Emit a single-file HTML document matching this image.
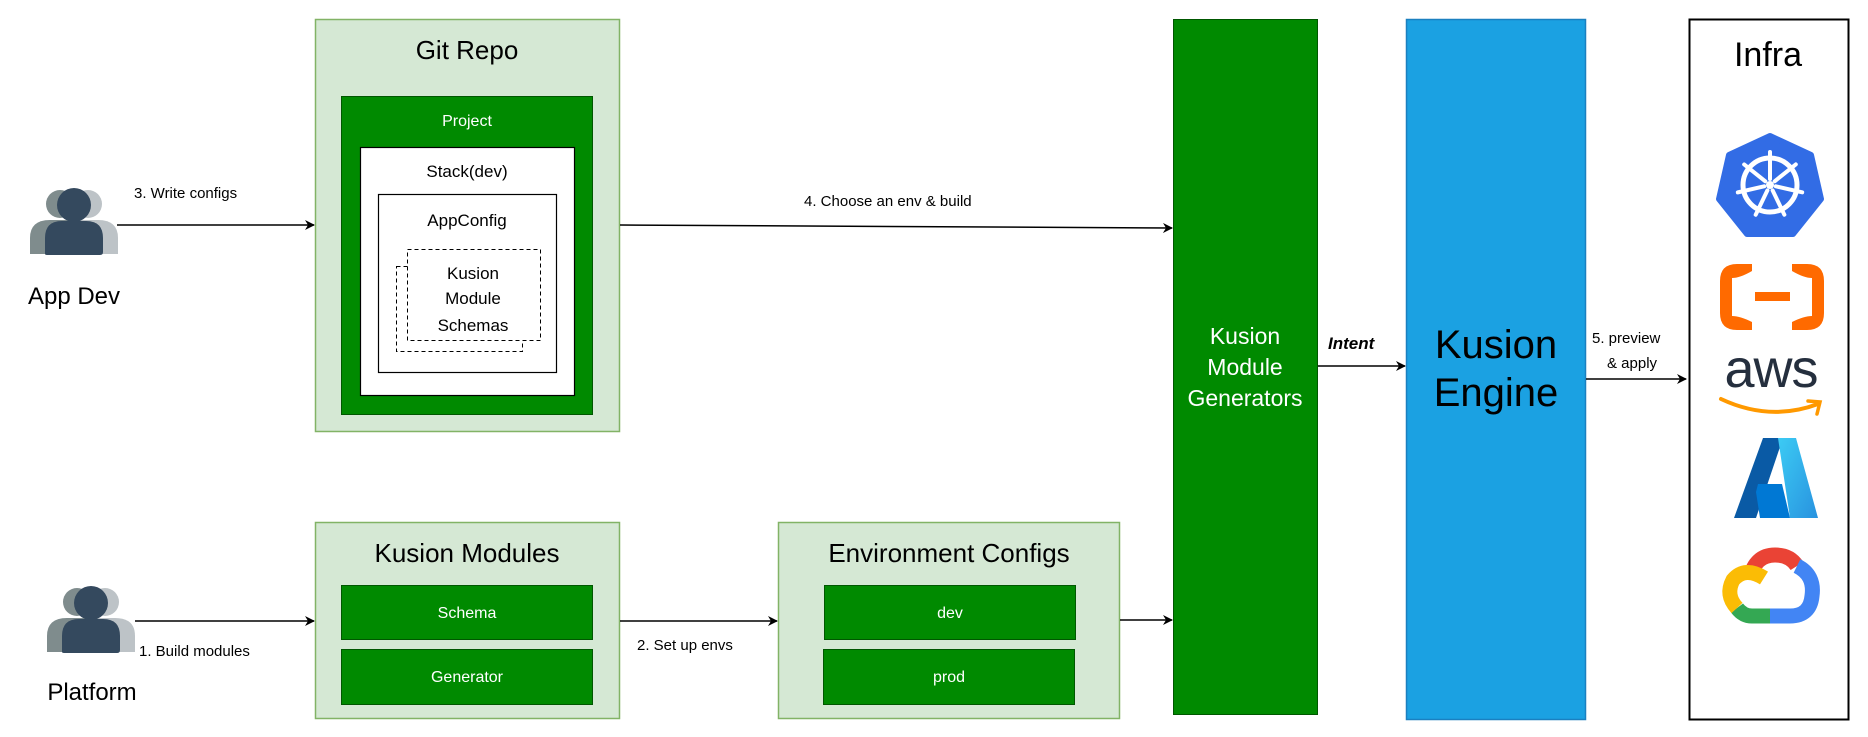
<!DOCTYPE html>
<html><head><meta charset="utf-8"><style>
html,body{margin:0;padding:0;background:#fff;}
svg{display:block;font-family:"Liberation Sans",Arial,sans-serif;}
</style></head><body>
<svg width="1868" height="737" viewBox="0 0 1868 737" xmlns="http://www.w3.org/2000/svg">
<defs>
<marker id="ar" viewBox="0 0 10 10" refX="9" refY="5" markerWidth="10" markerHeight="10" markerUnits="userSpaceOnUse" orient="auto">
<path d="M0,0 L10,5 L0,10 L3,5 z" fill="#000"/></marker>
<g id="person">
<circle cx="-14" cy="16" r="14" fill="#7f8c8d"/><path d="M-44,66 L-44,50 Q-44,32 -24,32 L-4,32 Q16,32 16,50 L16,66 Z" fill="#7f8c8d"/>
<circle cx="14" cy="16" r="14" fill="#bdc3c7"/><path d="M-16,66 L-16,50 Q-16,32 4,32 L24,32 Q44,32 44,50 L44,66 Z" fill="#bdc3c7"/>
<circle cx="0" cy="17" r="17" fill="#34495e"/><path d="M-29,66 Q-29,67 -26,67 L26,67 Q29,67 29,64 L29,50 Q29,33 12,33 L-12,33 Q-29,33 -29,50 Z" fill="#34495e"/>
</g>
</defs>

<!-- App Dev -->
<use href="#person" x="74" y="188"/>
<text x="74" y="304" font-size="24" text-anchor="middle">App Dev</text>
<line x1="117" y1="225" x2="314" y2="225" stroke="#000" stroke-width="1.5" marker-end="url(#ar)"/>
<text x="134" y="198" font-size="15">3. Write configs</text>

<!-- Git Repo -->
<rect x="315.5" y="19.5" width="304" height="412" fill="#d5e8d4" stroke="#82b366" stroke-width="1.5"/>
<text x="467" y="59" font-size="26" text-anchor="middle">Git Repo</text>
<rect x="341.5" y="96.5" width="251" height="318" fill="#008a00" stroke="#005700"/>
<text x="467" y="126" font-size="16" fill="#fff" text-anchor="middle">Project</text>
<rect x="360.5" y="147.5" width="214" height="248" fill="#fff" stroke="#000" stroke-width="1.2"/>
<text x="467" y="177" font-size="17" text-anchor="middle">Stack(dev)</text>
<rect x="378.5" y="194.5" width="178" height="178" fill="#fff" stroke="#000" stroke-width="1.2"/>
<text x="467" y="226" font-size="17" text-anchor="middle">AppConfig</text>
<rect x="396.5" y="266.5" width="126" height="85" fill="#fff" stroke="#000" stroke-dasharray="4 3"/>
<rect x="407.5" y="249.5" width="133" height="91" fill="#fff" stroke="#000" stroke-dasharray="4 3"/>
<text x="473" y="279" font-size="17" text-anchor="middle">Kusion</text>
<text x="473" y="304" font-size="17" text-anchor="middle">Module</text>
<text x="473" y="331" font-size="17" text-anchor="middle">Schemas</text>

<line x1="620" y1="225" x2="1172" y2="228" stroke="#000" stroke-width="1.5" marker-end="url(#ar)"/>
<text x="804" y="206" font-size="15">4. Choose an env &amp; build</text>

<!-- Platform -->
<use href="#person" x="91" y="586"/>
<text x="92" y="700" font-size="24" text-anchor="middle">Platform</text>
<line x1="135" y1="621" x2="314" y2="621" stroke="#000" stroke-width="1.5" marker-end="url(#ar)"/>
<text x="139" y="656" font-size="15">1. Build modules</text>

<!-- Kusion Modules -->
<rect x="315.5" y="522.5" width="304" height="196" fill="#d5e8d4" stroke="#82b366" stroke-width="1.5"/>
<text x="467" y="562" font-size="26" text-anchor="middle">Kusion Modules</text>
<rect x="341.5" y="585.5" width="251" height="54" fill="#008a00" stroke="#005700"/>
<text x="467" y="618" font-size="16" fill="#fff" text-anchor="middle">Schema</text>
<rect x="341.5" y="649.5" width="251" height="55" fill="#008a00" stroke="#005700"/>
<text x="467" y="682" font-size="16" fill="#fff" text-anchor="middle">Generator</text>

<line x1="620" y1="621" x2="777" y2="621" stroke="#000" stroke-width="1.5" marker-end="url(#ar)"/>
<text x="637" y="650" font-size="15">2. Set up envs</text>

<!-- Environment Configs -->
<rect x="778.5" y="522.5" width="341" height="196" fill="#d5e8d4" stroke="#82b366" stroke-width="1.5"/>
<text x="949" y="562" font-size="26" text-anchor="middle">Environment Configs</text>
<rect x="824.5" y="585.5" width="251" height="54" fill="#008a00" stroke="#005700"/>
<text x="950" y="618" font-size="16" fill="#fff" text-anchor="middle">dev</text>
<rect x="823.5" y="649.5" width="251" height="55" fill="#008a00" stroke="#005700"/>
<text x="949" y="682" font-size="16" fill="#fff" text-anchor="middle">prod</text>
<line x1="1120" y1="620" x2="1172" y2="620" stroke="#000" stroke-width="1.5" marker-end="url(#ar)"/>

<!-- Generators -->
<rect x="1173.5" y="19.5" width="144" height="695" fill="#008a00" stroke="#005700"/>
<text x="1245" y="344" font-size="23" fill="#fff" text-anchor="middle">Kusion</text>
<text x="1245" y="375" font-size="23" fill="#fff" text-anchor="middle">Module</text>
<text x="1245" y="406" font-size="23" fill="#fff" text-anchor="middle">Generators</text>

<text x="1328" y="349" font-size="17" font-weight="bold" font-style="italic">Intent</text>
<line x1="1318" y1="366" x2="1405" y2="366" stroke="#000" stroke-width="1.5" marker-end="url(#ar)"/>

<!-- Engine -->
<rect x="1406.5" y="19.5" width="179" height="700" fill="#1ba1e2" stroke="#1b80c0" stroke-width="1.5"/>
<text x="1496" y="358" font-size="40" text-anchor="middle">Kusion</text>
<text x="1496" y="406" font-size="40" text-anchor="middle">Engine</text>

<text x="1592" y="343" font-size="15">5. preview</text>
<text x="1607" y="368" font-size="15">&amp; apply</text>
<line x1="1586" y1="379" x2="1686" y2="379" stroke="#000" stroke-width="1.5" marker-end="url(#ar)"/>

<!-- Infra -->
<rect x="1689.5" y="19.5" width="159" height="700" fill="#fff" stroke="#000" stroke-width="2"/>
<text x="1768" y="66" font-size="34" text-anchor="middle">Infra</text>

<!-- k8s -->
<g transform="translate(1770,185)">
<polygon points="0,-49 41,-30 51,14 23,49 -23,49 -51,14 -41,-30" fill="#326ce5" stroke="#326ce5" stroke-width="6" stroke-linejoin="round"/>
<circle r="27" fill="none" stroke="#fff" stroke-width="5"/>
<circle r="4" fill="#fff"/>
<g stroke="#fff" stroke-width="4" stroke-linecap="round">
<line x1="0" y1="-33" x2="0" y2="-6" transform="rotate(0)"/>
<line x1="0" y1="-33" x2="0" y2="-6" transform="rotate(51.4)"/>
<line x1="0" y1="-33" x2="0" y2="-6" transform="rotate(102.8)"/>
<line x1="0" y1="-33" x2="0" y2="-6" transform="rotate(154.2)"/>
<line x1="0" y1="-33" x2="0" y2="-6" transform="rotate(205.7)"/>
<line x1="0" y1="-33" x2="0" y2="-6" transform="rotate(257.1)"/>
<line x1="0" y1="-33" x2="0" y2="-6" transform="rotate(308.5)"/>
</g></g>

<!-- Alibaba -->
<g fill="#ff6a00">
<path d="M1752,264 L1737,264 Q1720,264 1720,281 L1720,313 Q1720,330 1737,330 L1752,330 L1752,322 Q1740,316 1732,316 L1732,278 Q1740,278 1752,271 Z"/>
<path d="M1792,264 L1807,264 Q1824,264 1824,281 L1824,313 Q1824,330 1807,330 L1792,330 L1792,322 Q1804,316 1812,316 L1812,278 Q1804,278 1792,271 Z"/>
<rect x="1755" y="292" width="35" height="9"/>
</g>

<!-- aws -->
<text x="1771" y="387" font-size="54" fill="#252f3e" text-anchor="middle" letter-spacing="-1">aws</text>
<path d="M1721,399 Q1770,422 1818,404" fill="none" stroke="#ff9900" stroke-width="4" stroke-linecap="round"/>
<path d="M1808,401 L1820,402 L1817,414" fill="none" stroke="#ff9900" stroke-width="3.5" stroke-linecap="round"/>

<!-- Azure -->
<defs><linearGradient id="az" x1="0" y1="0" x2="1" y2="1"><stop offset="0" stop-color="#3ccbf4"/><stop offset="1" stop-color="#2892df"/></linearGradient></defs>
<polygon points="1763,438 1783,438 1756,518 1734,518" fill="#0a5aa5"/>
<polygon points="1778,438 1796,438 1818,518 1790,518" fill="url(#az)"/>
<polygon points="1758,484 1782,484 1790,518 1760,518 1756,492" fill="#0078d4"/>

<!-- GCP -->
<g fill="none" stroke-width="15">
<path d="M1750,578 Q1755,555 1775,555 Q1790,555 1797,566" stroke="#ea4335"/>
<path d="M1797,566 Q1815,575 1812,596 Q1810,616 1790,616 L1770,616" stroke="#4285f4"/>
<path d="M1770,616 L1752,616 Q1743,616 1737,608" stroke="#34a853"/>
<path d="M1737,608 Q1725,595 1733,580 Q1745,566 1764,578" stroke="#fbbc05"/>
</g>
</svg>
</body></html>
